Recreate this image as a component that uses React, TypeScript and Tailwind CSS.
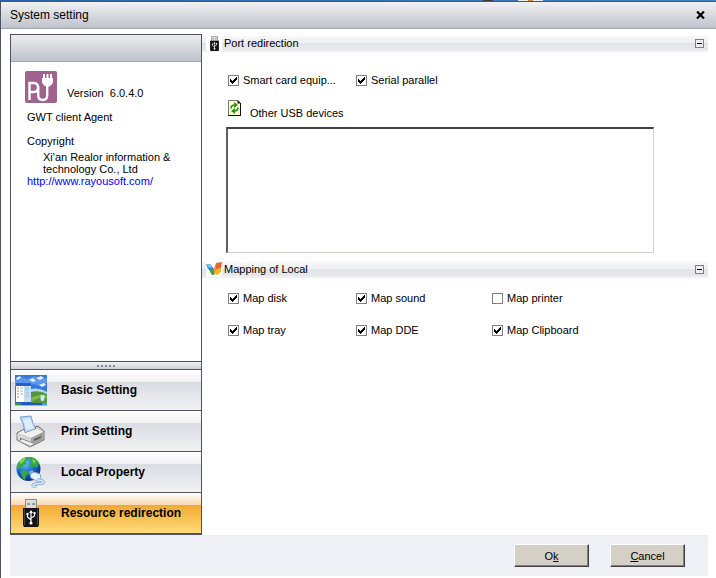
import { useState, type ReactNode } from "react";

function LogoIcon() {
  return (
    <svg width="32" height="32" viewBox="0 0 32 32" aria-hidden="true" className="shrink-0">
      <rect width="32" height="32" rx="2" fill="#9f638e" />
      <g fill="none" stroke="#fff" strokeWidth="2.4">
        <path d="M4.500 29V12H9q4 0 4 4.500T9 21H5.500" />
        <path d="M13.200 15v9q0 5 4.500 5t4.500-5v-9" />
      </g>
      <path d="M17 7h11v4q-1 4-5.500 5Q18 15 17 11zM18 3h2v5h-2zM21.500 3h2v5h-2zM25 3h2v5h-2z" fill="#fff" />
    </svg>
  );
}

function UsbIcon({ width, height }: { width: number; height: number }) {
  return (
    <svg width={width} height={height} viewBox="0 0 16 28" preserveAspectRatio="none" aria-hidden="true">
      <rect x="2" width="12" height="10" fill="#8a8a8a" />
      <rect x="3" y="1" width="10" height="8" fill="#dcdcdc" />
      <path d="M4 4h3v2H4zM9 4h3v2H9z" fill="#999" />
      <path d="M0 9h16v17l-1 2H1l-1-2z" fill="#141414" />
      <path d="M1 10h1v16H1zM14 10h1v16h-1z" fill="#444" />
      <path d="M8 12v12M4.500 15v3L8 21M11.500 14v3L8 19" fill="none" stroke="#fff" strokeWidth="1.200" />
      <path d="M6 14l2-3 2 3z" fill="#fff" />
      <circle cx="8" cy="24" r="1.600" fill="#fff" />
      <circle cx="4.500" cy="15" r="1.200" fill="#fff" />
      <path d="M10.500 13h2v2h-2z" fill="#fff" />
    </svg>
  );
}

function DesktopIcon() {
  return (
    <svg width="32" height="31" viewBox="0 0 32 31" aria-hidden="true">
      <rect width="32" height="31" fill="#3478dc" />
      <path d="M0 5l7-3 5 2 8-3 4 3 8-1v5l-7 3-6-2-7 2-6-2-6 2z" fill="#5b98ea" />
      <path d="M21 3l5-2 3 2-4 2zM14 5l4-2 3 3-3 1zM1 3l4-2 1 2-4 2zM24 10l5-2 2 2-4 2z" fill="#e0eefc" />
      <path d="M16 18q7-4 16-2v13H16z" fill="#55953a" />
      <path d="M16 14q8-2 16 3v2q-7-4-16-2z" fill="#b9d9ef" />
      <path d="M16 23q8-5 16-2v2q-8-1-16 4z" fill="#7db84c" />
      <rect x="1" y="8" width="15" height="20" fill="#2562bd" />
      <rect x="1" y="11" width="8" height="16" fill="#fff" />
      <rect x="9" y="11" width="7" height="16" fill="#c5ddf5" />
      <path d="M2 13h2M2 16h2M2 19h2M2 22h2" stroke="#d8b48f" strokeWidth="1.500" />
      <path d="M5 13h3M5 16h3M5 19h3M10 13h4M10 15h4M10 18h4M10 21h4" stroke="#a3bcd8" />
      <path d="M25 20l5 0-1 6h-3z" fill="#d5eee3" stroke="#7bb59c" strokeWidth=".6" />
      <rect y="28" width="32" height="2" fill="#1f55c8" />
      <rect y="28" width="6" height="2" fill="#3b9a3d" />
      <rect y="30" width="32" height="1" fill="#aeb4c0" />
      <rect x="27" y="28" width="5" height="2" fill="#38a6e8" />
    </svg>
  );
}

function PrinterIcon() {
  return (
    <svg width="30" height="33" viewBox="0 0 30 33" aria-hidden="true">
      <path d="M4 2l11-1q1 8 6 14L9 18Q8 8 4 2z" fill="#b4d6ff" stroke="#688bc0" strokeWidth=".8" />
      <path d="M7 4l7-1 4 10-8 2z" fill="#dceeff" />
      <path d="M1 18l7-4 1 4 11-4-1-2 3-1 6 5v9l-14 7-13-7z" fill="#c8c8c8" stroke="#666" strokeWidth=".9" />
      <path d="M2 18l6-3 1 3 11-4v-1l7 4-12 6z" fill="#f0f0f0" />
      <path d="M15 23l12-6v8l-12 6z" fill="#a2a2a2" />
      <path d="M1 19l14 5v8L2 25z" fill="#d8d8d8" />
      <path d="M4 23l11 4v3L4 26z" fill="#555" />
      <path d="M3 26l11 5 5-2-13-5z" fill="#f0f0f0" stroke="#777" strokeWidth=".5" />
      <path d="M18 24l7-3v2l-7 3z" fill="#5c5c5c" />
      <circle cx="25" cy="20" r=".8" fill="#3fac47" />
    </svg>
  );
}

function GlobeIcon() {
  return (
    <svg width="30" height="32" viewBox="0 0 30 32" aria-hidden="true">
      <defs>
        <radialGradient id="globe-sea" cx="35%" cy="25%" r="75%">
          <stop offset="0" stopColor="#6fc5ff" />
          <stop offset=".5" stopColor="#1b72dd" />
          <stop offset="1" stopColor="#08308e" />
        </radialGradient>
      </defs>
      <circle cx="12.500" cy="13" r="12" fill="url(#globe-sea)" />
      <path d="M2 7q4-6 10-6l1 3-4 1 2 3-4 1-1 4-3-1-2 2q-1-4 1-7zM14 1q6 0 9 6l-2 5-3-2-3 2-2-4 3-2-2-2zM5 15l5-1 3 3-3 3-1 4q-4-2-4-9z" fill="#36a83d" />
      <path d="M3 6q3-4 7-4l-2 3-3 3zM16 3l4 2-2 3z" fill="#87d851" />
      <path d="M14 18l4-2 6 2 1 4-4 3-6-3z" fill="#e4f2fc" stroke="#84a8c9" />
      <path d="M17 15l-4 2M21 24q8 0 6 3l-8 1q-5 2 2 3" fill="none" stroke="#79a6d0" strokeWidth="3" />
      <path d="M21 24q8 0 6 3l-8 1q-5 2 2 3" fill="none" stroke="#d8ebfc" strokeWidth="1.500" />
    </svg>
  );
}

function ButterflyIcon() {
  return (
    <svg width="16" height="14" viewBox="0 0 16 14" aria-hidden="true">
      <path d="M0 2l4 0 4 5v4L5 9 2 7z" fill="#278bd8" />
      <path d="M0 2l4 0 2 3-3 1z" fill="#74c2ee" />
      <path d="M3 8l5-1v6H6z" fill="#3ba449" />
      <path d="M10 1l6-1-1 6-6 4-1-3z" fill="#e66735" />
      <path d="M8 8l7-2v4l-4 3-3-1z" fill="#f5b81e" />
      <path d="M8 6l2-3v6l-2 3z" fill="#ee943a" />
    </svg>
  );
}

function RefreshPageIcon() {
  return (
    <svg width="13" height="16" viewBox="0 0 13 16" aria-hidden="true" className="shrink-0">
      <path d="M.5.5H10l2.500 3v12H.5z" fill="#ffffcf" stroke="#777" />
      <path d="M12.500 3v12.500H0" fill="none" stroke="#111" />
      <path d="M9.500 0v3.500H13z" fill="#111" />
      <path d="M3 8.500q0-3.500 4-3.500M10 7.500q0 3.500-4 3.500" fill="none" stroke="#249020" strokeWidth="1.700" />
      <path d="M6 2l4 3-4 3zM7 8l-4 3 4 3z" fill="#249020" />
    </svg>
  );
}

function CheckOption({ label, checked = false }: { label: string; checked?: boolean }) {
  return (
    <label className="flex h-4 items-center gap-1 whitespace-nowrap">
      <span className="relative flex size-[11px]">
        <input
          type="checkbox"
          defaultChecked={checked}
          className="peer size-[11px] appearance-none border border-[#808080] bg-white"
        />
        <svg
          viewBox="0 0 11 11"
          className="pointer-events-none absolute inset-0 hidden size-[11px] peer-checked:block"
          shapeRendering="crispEdges"
          aria-hidden="true"
        >
          <path d="M2 4h1v1h1v1h1V5h1V4h1V3h1V2h1v3H8v1H7v1H6v1H5v1H4V8H3V7H2z" fill="#000" />
        </svg>
      </span>
      {label}
    </label>
  );
}

function Section({ icon, title, children }: { icon: ReactNode; title: string; children: ReactNode }) {
  const [open, setOpen] = useState(true);
  return (
    <section>
      <header className="flex h-4 items-center bg-[linear-gradient(#f6f6f7_0_3px,#f0f1f4_3px_7px,#e2e4e7_7px_9px,#e6e7eb_9px_14px,#f0f0f2_14px)] px-1 pb-[2px]">
        <span className="flex h-4 w-4 items-center justify-center bg-white">{icon}</span>
        <h2 className="flex-1 pl-[2px]">{title}</h2>
        <button
          type="button"
          aria-label={`Toggle ${title}`}
          aria-expanded={open}
          onClick={() => setOpen(!open)}
          className="flex size-[9px] items-center justify-center border border-[#808080] bg-[#f0f0f2]"
        >
          <span className="h-px w-[5px] bg-black" />
        </button>
      </header>
      {open && children}
    </section>
  );
}

const navItems = [
  { label: "Basic Setting", icon: <DesktopIcon /> },
  { label: "Print Setting", icon: <PrinterIcon /> },
  { label: "Local Property", icon: <GlobeIcon /> },
  { label: "Resource redirection", icon: <UsbIcon width={16} height={28} /> },
];

const optionGrid = "grid grid-cols-[128px_136px_1fr] pl-[26px]";
const dialogButton =
  "h-[23px] w-[75px] border border-t-white border-l-white border-r-[#404040] border-b-[#404040] bg-[#d4d0c8] shadow-[inset_-1px_-1px_#808080]";

export default function App() {
  const [active, setActive] = useState(3);
  return (
    <div className="flex min-h-screen flex-col bg-white font-['Liberation_Sans',Arial,sans-serif] text-[11px] leading-3 text-black">
      <div className="flex h-px bg-linear-to-r from-[#2862a2] to-[#4484c0]">
        <span className="ml-[483px] w-[10px] bg-[#393939]" />
        <span className="ml-[25px] w-[10px] bg-[#eeeeea]" />
        <span className="w-[5px] bg-[#c88938]" />
        <span className="w-[10px] bg-[#eeeeea]" />
      </div>
      <div className="flex flex-1 flex-col border-t border-l border-[#4c5364]">
        <header className="flex h-[27px] items-center justify-between border-b border-[#9fa4ae] bg-linear-to-b from-[#f1f1f2] to-[#bfc3cc] pr-[11px] pl-[9px]">
          <h1 className="text-[12px] leading-4">System setting</h1>
          <button type="button" aria-label="Close" className="flex">
            <svg width="9" height="8" viewBox="0 0 9 8" aria-hidden="true">
              <path d="M1 .5l7 7M8 .5l-7 7" stroke="#000" strokeWidth="2.200" />
            </svg>
          </button>
        </header>

        <div className="flex flex-1 pt-[5px] pl-[9px]">
          <aside className="flex w-48 shrink-0 flex-col border border-b-2 border-[#4c5364]">
            <div className="h-[27px] border-b border-[#9fa4ae] bg-linear-to-b from-[#ececee] to-[#bfc3cc]" />
            <div className="flex-1 px-4 pt-[9px]">
              <div className="-ml-[2px] flex items-center gap-[10px]">
                <LogoIcon />
                <p className="pt-3 whitespace-pre">Version  6.0.4.0</p>
              </div>
              <p className="mt-2">GWT client Agent</p>
              <p className="mt-3">Copyright</p>
              <p className="mt-1 pl-4">
                Xi'an Realor information &amp;
                <br />
                technology Co., Ltd
              </p>
              <a href="http://www.rayousoft.com/" className="text-[#0000ff]">
                http://www.rayousoft.com/
              </a>
            </div>
            <div className="flex h-[9px] items-center justify-center gap-[2px] border-y border-[#4c5364] bg-linear-to-b from-[#f0f0f1] to-[#cfd1d6]">
              {[0, 1, 2, 3, 4].map((dot) => (
                <span key={dot} className="size-[2px] bg-[#858994]" />
              ))}
            </div>
            <nav className="divide-y divide-[#4c5364]">
              {navItems.map((item, i) => (
                <button
                  key={item.label}
                  type="button"
                  aria-current={active === i ? "page" : undefined}
                  onClick={() => setActive(i)}
                  className={`flex h-[41px] w-full items-center pl-1 text-left text-[12px] font-bold last:h-10 ${
                    active === i
                      ? "bg-[linear-gradient(#fff,#f8d8b0_12px,#f2a834_12px,#ffdc78)]"
                      : "bg-[linear-gradient(#fff,#f1f1f3_12px,#dadce3_12px,#e4e5ea_24px,#f2f2f2)]"
                  }`}
                >
                  <span className="flex w-8 justify-center">{item.icon}</span>
                  <span className="pl-[14px]">{item.label}</span>
                </button>
              ))}
            </nav>
          </aside>

          <main className="mr-2 flex-1 pt-[2px]">
            <Section icon={<UsbIcon width={9} height={15} />} title="Port redirection">
              <div className={`${optionGrid} pt-5`}>
                <CheckOption label="Smart card equip..." checked />
                <CheckOption label="Serial parallel" checked />
              </div>
              <div className="mt-3 flex pl-[26px]">
                <RefreshPageIcon />
                <label htmlFor="usb-devices" className="pt-[7px] pl-[9px]">
                  Other USB devices
                </label>
              </div>
              <div className="mt-2 mr-[54px] mb-[9px] ml-6">
                <textarea
                  id="usb-devices"
                  className="block h-[126px] w-full resize-none border border-t-2 border-l-2 border-t-[#404040] border-l-[#606060] border-r-[#d4d0c8] border-b-[#d4d0c8] bg-white p-1 outline-none"
                />
              </div>
            </Section>
            <Section icon={<ButterflyIcon />} title="Mapping of Local">
              <div className={`${optionGrid} gap-y-4 pt-3`}>
                <CheckOption label="Map disk" checked />
                <CheckOption label="Map sound" checked />
                <CheckOption label="Map printer" />
                <CheckOption label="Map tray" checked />
                <CheckOption label="Map DDE" checked />
                <CheckOption label="Map Clipboard" checked />
              </div>
            </Section>
          </main>
        </div>

        <footer className="mr-2 mb-[2px] ml-[9px] flex h-[41px] items-center justify-end gap-[21px] bg-[#eff0f5] pr-[23px]">
          <button type="button" className={dialogButton}>
            O<span className="underline">k</span>
          </button>
          <button type="button" className={dialogButton}>
            <span className="underline">C</span>ancel
          </button>
        </footer>
      </div>
    </div>
  );
}
